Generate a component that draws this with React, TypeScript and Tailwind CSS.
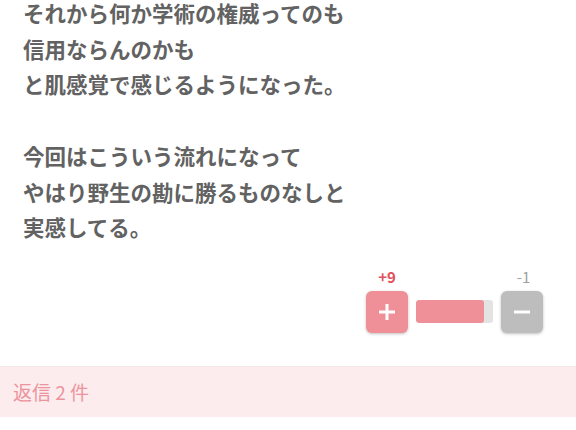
export default function App() {
  const up = 9;
  const down = 1;
  const ratio = (up / (up + down)) * 100;

  return (
    <div className="w-[576px] h-[430px] overflow-hidden bg-white font-['Noto_Sans_CJK_JP','Noto_Sans',sans-serif]">
      {/* Post body */}
      <div className="px-[23px] -mt-[5px] text-[21.5px] leading-[35.7px] font-bold text-[#626262]">
        <p>
          それから何か学術の権威ってのも
          <br />
          信用ならんのかも
          <br />
          と肌感覚で感じるようになった。
        </p>
        <p className="mt-[35.7px]">
          今回はこういう流れになって
          <br />
          やはり野生の勘に勝るものなしと
          <br />
          実感してる。
        </p>
      </div>

      {/* Vote */}
      <div className="flex justify-end pr-[33px] mt-[22px]">
        <div className="flex flex-col">
          <div className="flex justify-between text-[15px] leading-[20px]">
            <span className="w-[42px] text-center font-bold text-[#e2525c]">+{up}</span>
            <span className="w-[42px] text-center text-[#a0a0a0] pl-[3px]">-{down}</span>
          </div>
          <div className="flex items-center gap-2 mt-1">
            <button className="w-[42px] h-[42px] rounded-[6px] bg-[#ef8f98] shadow-[0_1px_3px_rgba(0,0,0,0.25)] flex items-center justify-center">
              <svg width="18" height="18" viewBox="0 0 18 18">
                <path d="M9 1v16M1 9h16" stroke="white" strokeWidth="3" />
              </svg>
            </button>
            <div className="w-[77px] h-[23px] rounded-[3px] bg-[#e3e3e3] overflow-hidden">
              <div className="h-full bg-[#ef8f98] rounded-[3px]" style={{ width: `${ratio * 0.98}%` }} />
            </div>
            <button className="w-[42px] h-[42px] rounded-[6px] bg-[#bdbdbd] shadow-[0_1px_3px_rgba(0,0,0,0.25)] flex items-center justify-center">
              <svg width="18" height="18" viewBox="0 0 18 18">
                <path d="M1 9h16" stroke="white" strokeWidth="3" />
              </svg>
            </button>
          </div>
        </div>
      </div>

      {/* Replies */}
      <div className="mt-[33px] h-[51px] flex items-center px-[13px] bg-[#fcecee] border-t border-[#f3e6e8] text-[19px] text-[#ec949d]">
        返信 2 件
      </div>
    </div>
  );
}
